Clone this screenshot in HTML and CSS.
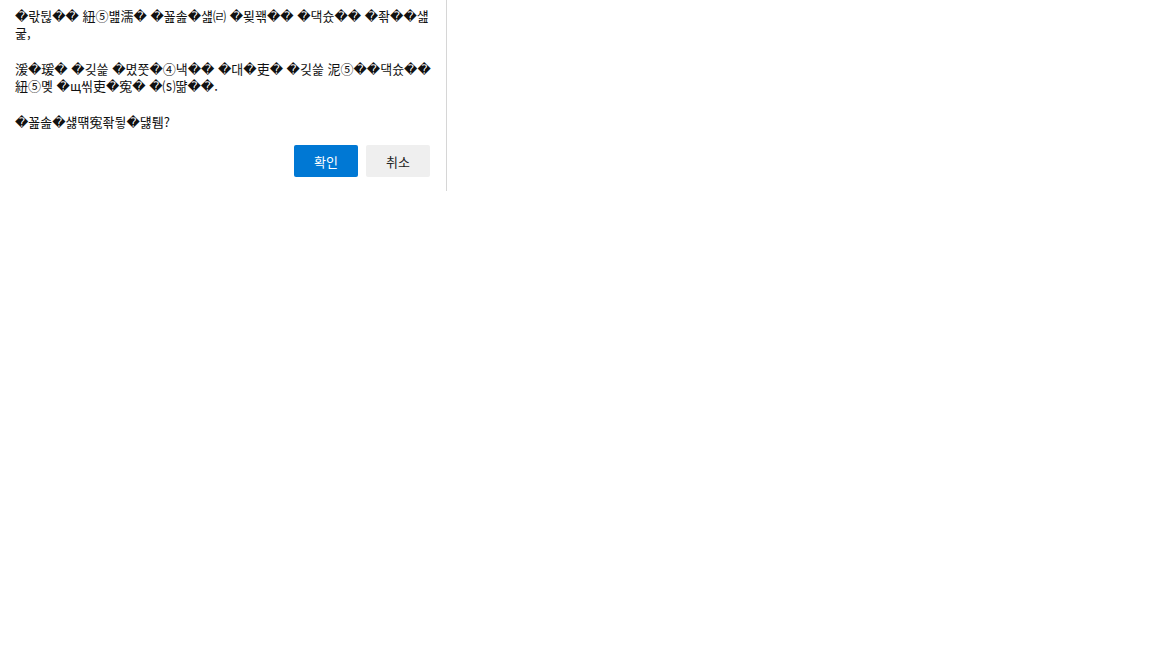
FILE: index.html
```html
<!DOCTYPE html>
<html lang="ko">
<head>
<meta charset="utf-8">
<title>Confirm</title>
<link rel="stylesheet" href="styles.css">
</head>
<body>
<div class="confirmBox">
  <div class="confirmText">
    <p>�띿뒪�� 紐⑤뱶濡� �꾪솚�섎㈃ �묒꽦�� �댁슜�� �좎��섎굹,</p>
    <p>湲�瑗� �깆쓽 �몄쭛�④낵�� �대�吏� �깆쓽 泥⑤��댁슜�� 紐⑤몢 �щ씪吏�寃� �⒮땲��.</p>
    <p>�꾪솚�섏떆寃좎뒿�덇퉴?</p>
  </div>
  <div class="confirmButtons">
    <button type="button" class="btnOk">확인</button>
    <button type="button" class="btnCancel">취소</button>
  </div>
</div>
</body>
</html>
```

FILE: styles.css
```css
body {
  background: #fff;
  margin: 0;
}
.confirmBox {
  border-right: 1px solid #d6d6d6;
  box-sizing: border-box;
  padding: 7px 15px 14px 15px;
  width: 447px;
}
.confirmText {
  color: #111;
  font-family: "Noto Sans CJK KR", "DejaVu Sans", sans-serif;
  font-size: 13px;
  line-height: 17px;
}
.confirmText p {
  margin: 0 0 19px 0;
}
.confirmText p:last-child {
  margin-bottom: 0;
}
.confirmButtons {
  display: flex;
  gap: 8px;
  justify-content: flex-end;
  margin-top: 15px;
  padding-right: 1px;
}
.confirmButtons button {
  border: 0;
  border-radius: 2px;
  cursor: pointer;
  font-family: "Noto Sans CJK KR", sans-serif;
  font-size: 13px;
  height: 32px;
  padding: 0;
  width: 64px;
}
.btnOk {
  background: #0078d4;
  color: #fff;
}
.btnCancel {
  background: #efefef;
  color: #222;
}
```
